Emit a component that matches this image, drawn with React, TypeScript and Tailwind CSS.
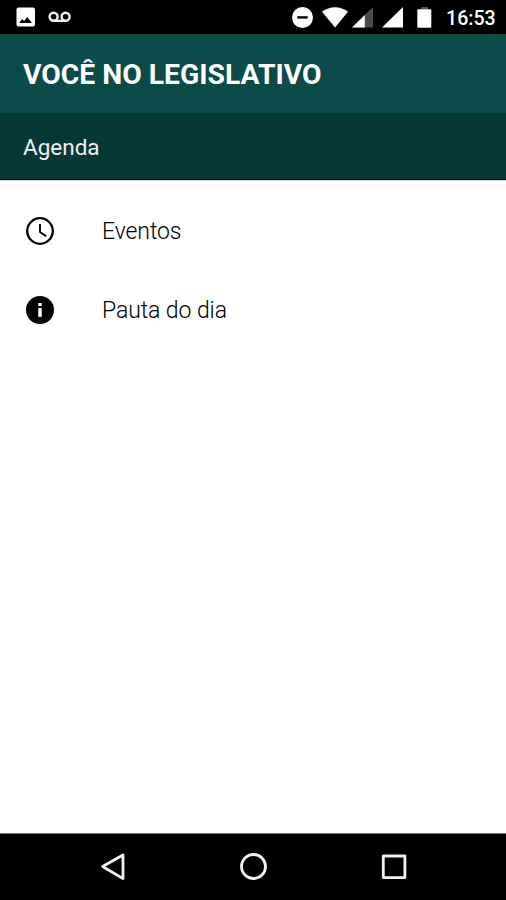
import React from "react";

interface MenuItem {
    label: string;
    icon: React.ReactNode;
}

const ClockIcon = () => (
    <svg width="28" height="28" viewBox="0 0 28 28" fill="none" stroke="#000">
        <circle cx="14" cy="14" r="12.8" strokeWidth="2.3" />
        <path d="M14 7v8l6.2 4.2" strokeWidth="1.9" />
    </svg>
);

const InfoIcon = () => (
    <svg width="28" height="28" viewBox="0 0 28 28">
        <circle cx="14" cy="14" r="14" fill="#000" />
        <path d="M12.3 7h3.4v3h-3.4zM12.3 12h3.4v9h-3.4z" fill="#fff" />
    </svg>
);

const items: MenuItem[] = [
    { label: "Eventos", icon: <ClockIcon /> },
    { label: "Pauta do dia", icon: <InfoIcon /> },
];

const StatusBar = () => (
    <div className="flex h-[34px] shrink-0 items-center bg-black pr-2.5 pl-4 text-white">
        <svg width="20" height="20" viewBox="0 0 20 20">
            <rect x="0.5" y="0.5" width="18.5" height="19" rx="2" fill="#fff" />
            <path d="M3.3 16l2.9-4 2 2 3-4 4.8 6z" fill="#000" />
        </svg>
        <svg width="24" height="12" viewBox="0 0 24 12" className="ml-3" fill="none" stroke="#f2f2f2" strokeWidth="2.4">
            <circle cx="5.6" cy="5.8" r="4" />
            <circle cx="17.6" cy="5.8" r="4" />
            <path d="M5.6 9.8h12" />
        </svg>
        <div className="ml-auto flex items-center">
            <svg width="21" height="21" viewBox="0 0 21 21">
                <circle cx="10.5" cy="10.5" r="10.5" fill="#fff" />
                <path d="M5.3 9.2h10.4v2.4H5.3z" fill="#000" />
            </svg>
            <svg width="26" height="21" viewBox="0 0 26 21" className="ml-[9px]">
                <path d="M0 4.8C7.5-1.3 18.5-1.3 26 4.8L13 20.5z" fill="#fff" />
            </svg>
            <svg width="21" height="21" viewBox="0 0 21 21" className="ml-1">
                <path d="M21 0v20.5H0z" fill="#4a4a4a" />
                <path d="M12.8 8v12.5H0z" fill="#fff" />
            </svg>
            <svg width="21" height="21" viewBox="0 0 21 21" className="ml-[9px]">
                <path d="M21 0v20.5H0z" fill="#fff" />
            </svg>
            <svg width="15" height="21" viewBox="0 0 15 21" className="ml-3.5">
                <path d="M4 0h7v2.5H4z" fill="#555" />
                <rect x="0.3" y="2.3" width="14" height="18.4" rx="1" fill="#fff" />
            </svg>
            <span className="ml-3.5 w-[50px] pt-[3px] text-[19.6px] leading-none font-medium whitespace-nowrap">16:53</span>
        </div>
    </div>
);

const NavBar = () => (
    <div className="flex h-[67px] shrink-0 items-center justify-between border-t border-[#777] bg-black pr-[99px] pl-[99px]">
        <svg width="26" height="28" viewBox="0 0 26 28" fill="none" stroke="#f2f2f2" strokeWidth="2.8" strokeLinejoin="round">
            <path d="M3.6 13.5L24 2v23.6z" />
        </svg>
        <svg width="28" height="28" viewBox="0 0 28 28" fill="none" stroke="#f2f2f2" strokeWidth="2.8">
            <circle cx="14.5" cy="13.5" r="12" />
        </svg>
        <svg width="26" height="26" viewBox="0 0 26 26" fill="none" stroke="#f2f2f2" strokeWidth="2.8" strokeLinejoin="round">
            <rect x="2.3" y="2" width="21.6" height="21.6" />
        </svg>
    </div>
);

const App = () => {
    return (
        <div className="flex h-[900px] w-[506px] flex-col bg-white font-['Roboto',sans-serif]">
            <StatusBar />
            <header className="flex h-[79px] shrink-0 items-center bg-[#0b4b49] pt-[3px] pl-[23px]">
                <h1 className="text-[28.3px] leading-none font-bold whitespace-nowrap text-white">
                    VOCÊ NO LEGISLATIVO
                </h1>
            </header>
            <div className="flex h-[67px] shrink-0 items-center border-b border-black bg-[#083737] pt-[3px] pl-[23px]">
                <h2 className="text-[22.5px] leading-none text-[#eef2f2]">Agenda</h2>
            </div>
            <ul className="flex-1 border-t border-[#d0cccb] pt-2.5">
                {items.map((item) => (
                    <li key={item.label} className="flex h-[79px] items-center gap-12 pl-[26px]">
                        {item.icon}
                        <span className="pt-px text-[23px] leading-none font-light tracking-[-0.08px] text-black">
                            {item.label}
                        </span>
                    </li>
                ))}
            </ul>
            <NavBar />
        </div>
    );
};

export default App;
